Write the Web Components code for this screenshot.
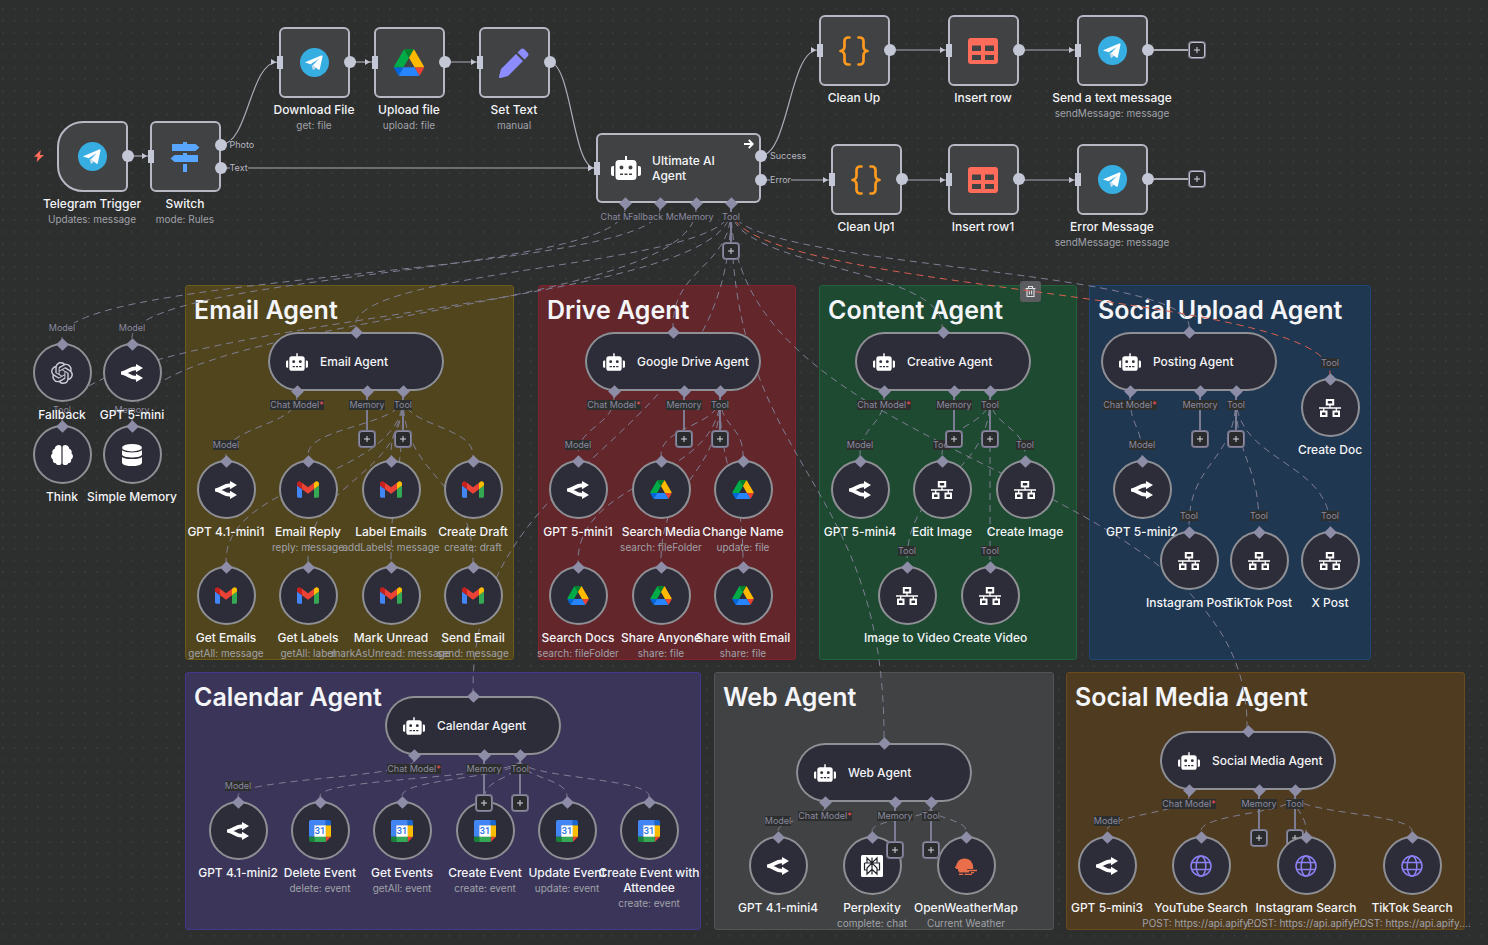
<!DOCTYPE html>
<html lang="en">
<head>
<meta charset="utf-8">
<meta name="viewport" content="width=device-width, initial-scale=1">
<title>Workflow canvas</title>
<style>
html, body { margin: 0; height: 100%; background: #2d2e2e; }
body { font-family: Inter, "Liberation Sans", sans-serif; color: #f4f5f8; }
</style>
</head>
<body>
<flow-canvas>
  <sticky-note x="185" y="285" w="329" h="375" tone="olive">Email Agent</sticky-note>
  <sticky-note x="538" y="285" w="258" h="375" tone="red">Drive Agent</sticky-note>
  <sticky-note x="819" y="285" w="258" h="375" tone="green" removable>Content Agent</sticky-note>
  <sticky-note x="1089" y="285" w="282" h="375" tone="blue">Social Upload Agent</sticky-note>
  <sticky-note x="185" y="672" w="516" h="258" tone="violet">Calendar Agent</sticky-note>
  <sticky-note x="714" y="672" w="340" h="258" tone="gray">Web Agent</sticky-note>
  <sticky-note x="1066" y="672" w="399" h="258" tone="brown">Social Media Agent</sticky-note>

  <flow-edges></flow-edges>

  <step-node x="92" y="121" icon="telegram" trigger>Telegram Trigger<span slot="sub">Updates: message</span></step-node>
  <step-node x="185" y="121" icon="signs" input outputs="Photo,Text">Switch<span slot="sub">mode: Rules</span></step-node>
  <step-node x="314" y="27" icon="telegram" input>Download File<span slot="sub">get: file</span></step-node>
  <step-node x="409" y="27" icon="drive" input>Upload file<span slot="sub">upload: file</span></step-node>
  <step-node x="514" y="27" icon="pencil" input>Set Text<span slot="sub">manual</span></step-node>
  <step-node x="854" y="15" icon="braces" input>Clean Up</step-node>
  <step-node x="983" y="15" icon="table" input>Insert row</step-node>
  <step-node x="1112" y="15" icon="telegram" input plus>Send a text message<span slot="sub">sendMessage: message</span></step-node>
  <step-node x="866" y="144" icon="braces" input>Clean Up1</step-node>
  <step-node x="983" y="144" icon="table" input>Insert row1</step-node>
  <step-node x="1112" y="144" icon="telegram" input plus>Error Message<span slot="sub">sendMessage: message</span></step-node>
  <root-agent x="596" y="133">Ultimate AI Agent</root-agent>

  <tool-node x="62" y="455" icon="brain" port="Tool">Think</tool-node>
  <tool-node x="132" y="455" icon="database" port="Memory">Simple Memory</tool-node>
  <tool-node x="62" y="373" icon="openai" port="Model">Fallback</tool-node>
  <tool-node x="132" y="373" icon="fork" port="Model">GPT 5-mini</tool-node>

  <tool-node x="226" y="490" icon="fork" port="Model">GPT 4.1-mini1</tool-node>
  <tool-node x="308" y="490" icon="gmail">Email Reply<span slot="sub">reply: message</span></tool-node>
  <tool-node x="391" y="490" icon="gmail">Label Emails<span slot="sub">addLabels: message</span></tool-node>
  <tool-node x="473" y="490" icon="gmail">Create Draft<span slot="sub">create: draft</span></tool-node>
  <tool-node x="226" y="596" icon="gmail">Get Emails<span slot="sub">getAll: message</span></tool-node>
  <tool-node x="308" y="596" icon="gmail">Get Labels<span slot="sub">getAll: label</span></tool-node>
  <tool-node x="391" y="596" icon="gmail">Mark Unread<span slot="sub">markAsUnread: message</span></tool-node>
  <tool-node x="473" y="596" icon="gmail">Send Email<span slot="sub">send: message</span></tool-node>

  <tool-node x="578" y="490" icon="fork" port="Model">GPT 5-mini1</tool-node>
  <tool-node x="661" y="490" icon="drive">Search Media<span slot="sub">search: fileFolder</span></tool-node>
  <tool-node x="743" y="490" icon="drive">Change Name<span slot="sub">update: file</span></tool-node>
  <tool-node x="578" y="596" icon="drive">Search Docs<span slot="sub">search: fileFolder</span></tool-node>
  <tool-node x="661" y="596" icon="drive">Share Anyone<span slot="sub">share: file</span></tool-node>
  <tool-node x="743" y="596" icon="drive">Share with Email<span slot="sub">share: file</span></tool-node>

  <tool-node x="860" y="490" icon="fork" port="Model">GPT 5-mini4</tool-node>
  <tool-node x="942" y="490" icon="network" port="Tool">Edit Image</tool-node>
  <tool-node x="1025" y="490" icon="network" port="Tool">Create Image</tool-node>
  <tool-node x="907" y="596" icon="network" port="Tool">Image to Video</tool-node>
  <tool-node x="990" y="596" icon="network" port="Tool">Create Video</tool-node>

  <tool-node x="1330" y="408" icon="network" port="Tool">Create Doc</tool-node>
  <tool-node x="1142" y="490" icon="fork" port="Model">GPT 5-mini2</tool-node>
  <tool-node x="1189" y="561" icon="network" port="Tool">Instagram Post</tool-node>
  <tool-node x="1259" y="561" icon="network" port="Tool">TikTok Post</tool-node>
  <tool-node x="1330" y="561" icon="network" port="Tool">X Post</tool-node>

  <tool-node x="238" y="831" icon="fork" port="Model">GPT 4.1-mini2</tool-node>
  <tool-node x="320" y="831" icon="calendar">Delete Event<span slot="sub">delete: event</span></tool-node>
  <tool-node x="402" y="831" icon="calendar">Get Events<span slot="sub">getAll: event</span></tool-node>
  <tool-node x="485" y="831" icon="calendar">Create Event<span slot="sub">create: event</span></tool-node>
  <tool-node x="567" y="831" icon="calendar">Update Event<span slot="sub">update: event</span></tool-node>
  <tool-node x="649" y="831" icon="calendar">Create Event with Attendee<span slot="sub">create: event</span></tool-node>

  <tool-node x="778" y="866" icon="fork" port="Model">GPT 4.1-mini4</tool-node>
  <tool-node x="872" y="866" icon="perplexity">Perplexity<span slot="sub">complete: chat</span></tool-node>
  <tool-node x="966" y="866" icon="weather">OpenWeatherMap<span slot="sub">Current Weather</span></tool-node>

  <tool-node x="1107" y="866" icon="fork" port="Model">GPT 5-mini3</tool-node>
  <tool-node x="1201" y="866" icon="globe">YouTube Search<span slot="sub">POST: https://api.apify....</span></tool-node>

  <agent-node x="268" y="332">Email Agent</agent-node>
  <agent-node x="585" y="332">Google Drive Agent</agent-node>
  <agent-node x="855" y="332">Creative Agent</agent-node>
  <agent-node x="1101" y="332">Posting Agent</agent-node>
  <agent-node x="385" y="696">Calendar Agent</agent-node>
  <agent-node x="796" y="743">Web Agent</agent-node>
  <agent-node x="1160" y="731">Social Media Agent</agent-node>

  <tool-node x="1306" y="866" icon="globe">Instagram Search<span slot="sub">POST: https://api.apify....</span></tool-node>
  <tool-node x="1412" y="866" icon="globe">TikTok Search<span slot="sub">POST: https://api.apify....</span></tool-node>
</flow-canvas>

<script>
const robot = `<svg viewBox="0 0 30 24"><path fill="#fff" fill-rule="evenodd" d="M14 0h2v4h6a3.500 3.500 0 0 1 3.500 3.500v13A3.500 3.500 0 0 1 22 24H8a3.500 3.500 0 0 1-3.500-3.500v-13A3.500 3.500 0 0 1 8 4h6zM10.500 9.500a2 2 0 1 0 0 4 2 2 0 0 0 0-4zm9 0a2 2 0 1 0 0 4 2 2 0 0 0 0-4zM9 17.500V19h3v-1.500zm4.500 0V19h3v-1.500zm4.500 0V19h3v-1.500zM3 10v10H2a2 2 0 0 1-2-2v-6a2 2 0 0 1 2-2zm24 0h1a2 2 0 0 1 2 2v6a2 2 0 0 1-2 2h-1z"/></svg>`;

const ICONS = {
  robot,
  telegram: `<svg viewBox="0 0 24 24"><circle cx="12" cy="12" r="12" fill="#36aee2"/><path fill="#c8daea" d="M9.500 13.600l1.100 4.300c.1.300.5.400.8.200l2-1.900z"/><path fill="#fff" d="M4.800 11.500 17.500 6.300c.8-.3 1.300.1 1.100 1l-2.200 10c-.2.700-.7.900-1.300.5l-4.500-3.600 5-5.200-6.800 4.400-3.900-1.200c-.7-.2-.7-.4-.1-.7z"/></svg>`,
  signs: `<svg viewBox="0 0 30 30"><path fill="#58a6ff" d="M13 0h4v2h8.500L29.500 5.500 25.500 9H2V2h11zM17 11v2h11v7H4.500L.5 16.500 4.500 13H13v-2zM13 22h4v8h-4z"/></svg>`,
  drive: `<svg viewBox="0 0 87.300 78"><path d="m6.600 66.850 3.850 6.650c.8 1.400 1.950 2.500 3.300 3.300l13.750-23.800h-27.500c0 1.550.4 3.100 1.200 4.500z" fill="#0066da"/><path d="m43.650 25-13.750-23.800c-1.350.8-2.500 1.900-3.300 3.300l-25.400 44a9.060 9.060 0 0 0 -1.200 4.500h27.500z" fill="#00ac47"/><path d="m73.550 76.800c1.350-.8 2.500-1.900 3.300-3.300l1.600-2.750 7.650-13.250c.8-1.400 1.200-2.950 1.200-4.500h-27.500l5.850 11.500z" fill="#ea4335"/><path d="m43.650 25 13.750-23.800c-1.350-.8-2.900-1.200-4.500-1.200h-18.500c-1.600 0-3.150.45-4.500 1.200z" fill="#00832d"/><path d="m59.800 53h-32.300l-13.750 23.800c1.350.8 2.900 1.200 4.500 1.200h50.800c1.600 0 3.150-.45 4.500-1.200z" fill="#2684fc"/><path d="m73.400 26.500-12.700-22c-.8-1.400-1.950-2.500-3.300-3.300l-13.750 23.800 16.150 28h27.450c0-1.550-.4-3.100-1.200-4.500z" fill="#ffba00"/></svg>`,
  pencil: `<svg viewBox="0 0 30 30"><path fill="#8d8cff" d="M21.500 1.500a2.800 2.800 0 0 1 4 0l3 3a2.800 2.800 0 0 1 0 4l-3 3-7-7zM17 6l7 7L9 28l-7.500 2c-1 .2-1.700-.5-1.500-1.500L2 21z"/></svg>`,
  braces: `<svg viewBox="0 0 30 30" fill="none" stroke="#ff9a1f" stroke-width="2.700" stroke-linecap="round" stroke-linejoin="round"><path d="M10.500 1.500H9A3.500 3.500 0 0 0 5.500 5v5.500A4.500 4.500 0 0 1 1.500 15a4.500 4.500 0 0 1 4 4.500V25A3.500 3.500 0 0 0 9 28.500h1.500M19.500 1.500H21A3.500 3.500 0 0 1 24.500 5v5.500a4.500 4.500 0 0 0 4 4.500 4.500 4.500 0 0 0-4 4.500V25a3.500 3.500 0 0 1-3.500 3.500h-1.500"/></svg>`,
  table: `<svg viewBox="0 0 30 26"><path fill="#ff6d5a" fill-rule="evenodd" d="M3 0h24a3 3 0 0 1 3 3v20a3 3 0 0 1-3 3H3a3 3 0 0 1-3-3V3a3 3 0 0 1 3-3zm1 7.500V13h9V7.500zm13 0V13h9V7.500zM4 17v5h9v-5zm13 0v5h9v-5z"/></svg>`,
  openai: `<svg viewBox="0 0 24 24"><path fill="#c9cad6" d="M22.2819 9.8211a5.9847 5.9847 0 0 0-.5157-4.9108 6.0462 6.0462 0 0 0-6.5098-2.9A6.0651 6.0651 0 0 0 4.9807 4.1818a5.9847 5.9847 0 0 0-3.9977 2.9 6.0462 6.0462 0 0 0 .7427 7.0966 5.98 5.98 0 0 0 .511 4.9107 6.051 6.051 0 0 0 6.5146 2.9001A5.9847 5.9847 0 0 0 13.2599 24a6.0557 6.0557 0 0 0 5.7718-4.2058 5.9894 5.9894 0 0 0 3.9977-2.9001 6.0557 6.0557 0 0 0-.7475-7.0729zm-9.022 12.6081a4.4755 4.4755 0 0 1-2.8764-1.0408l.1419-.0804 4.7783-2.7582a.7948.7948 0 0 0 .3927-.6813v-6.7369l2.02 1.1686a.071.071 0 0 1 .038.052v5.5826a4.504 4.504 0 0 1-4.4945 4.4944zm-9.6607-4.1254a4.4708 4.4708 0 0 1-.5346-3.0137l.142.0852 4.783 2.7582a.7712.7712 0 0 0 .7806 0l5.8428-3.3685v2.3324a.0804.0804 0 0 1-.0332.0615L9.74 19.9502a4.4992 4.4992 0 0 1-6.1408-1.6464zM2.3408 7.8956a4.485 4.485 0 0 1 2.3655-1.9728V11.6a.7664.7664 0 0 0 .3879.6765l5.8144 3.3543-2.0201 1.1685a.0757.0757 0 0 1-.071 0l-4.8303-2.7865A4.504 4.504 0 0 1 2.3408 7.872zm16.5963 3.8558L13.1038 8.364 15.1192 7.2a.0757.0757 0 0 1 .071 0l4.8303 2.7913a4.4944 4.4944 0 0 1-.6765 8.1042v-5.6772a.79.79 0 0 0-.407-.667zm2.0107-3.0231l-.142-.0852-4.7735-2.7818a.7759.7759 0 0 0-.7854 0L9.409 9.2297V6.8974a.0662.0662 0 0 1 .0284-.0615l4.8303-2.7866a4.4992 4.4992 0 0 1 6.6802 4.66zM8.3065 12.863l-2.02-1.1638a.0804.0804 0 0 1-.038-.0567V6.0742a4.4992 4.4992 0 0 1 7.3757-3.4537l-.142.0805L8.704 5.459a.7948.7948 0 0 0-.3927.6813zm1.0976-2.3654l2.602-1.4998 2.6069 1.4998v2.9994l-2.5974 1.4997-2.6067-1.4997Z"/></svg>`,
  fork: `<svg viewBox="0 0 22 18"><path fill="none" stroke="#fff" stroke-width="3.600" d="M2 9c5-.8 6-4.900 14-4.900M2 9c5 .8 6 4.900 14 4.900"/><path fill="#fff" d="M0 7.600 6 6v6l-6-1.600zM15 0l7 4.100-7 4.100zM15 9.800l7 4.100-7 4.100z"/></svg>`,
  brain: `<svg viewBox="0 0 22 20"><path fill="#fff" d="M10.400 2v16c0 3-5 2.700-5.500.2C2.800 18.300 1.300 16.500 2 14.500-.5 13 -.5 9.700 1.500 8.500.7 6.200 2 4.300 3.600 4 4-.8 10.400-1 10.400 2zM11.600 2v16c0 3 5 2.700 5.500.2 2.100.1 3.600-1.700 2.900-3.700 2.500-1.500 2.500-4.800.5-6 .8-2.300-.5-4.200-2.100-4.500C18-.8 11.600-1 11.600 2z"/></svg>`,
  database: `<svg viewBox="0 0 20 22" fill="#fff"><ellipse cx="10" cy="3.700" rx="10" ry="3.700"/><path d="M0 6.200c4 3 16 3 20 0v4c0 4.300-20 4.300-20 0zM0 12.400c4 3 16 3 20 0v6c0 4.800-20 4.800-20 0z"/><path stroke="#2d2d39" stroke-width="1.200" fill="none" d="M0 12c2 3.300 18 3.300 20 0"/></svg>`,
  gmail: `<svg viewBox="52 42 88 66"><path fill="#4285f4" d="M58 108h14V74L52 59v43c0 3.320 2.690 6 6 6"/><path fill="#34a853" d="M120 108h14c3.320 0 6-2.690 6-6V59l-20 15"/><path fill="#fbbc04" d="M120 48v26l20-15v-8c0-7.420-8.470-11.650-14.400-7.200"/><path fill="#ea4335" d="M72 74V48l24 18 24-18v26L96 92"/><path fill="#c5221f" d="M52 51v8l20 15V48l-5.600-4.200c-5.940-4.450-14.400-.22-14.400 7.200"/></svg>`,
  network: `<svg viewBox="0 0 22 18" fill="none" stroke="#fff"><path stroke-width="2" d="M7.800 1h6.400v4.600H7.800zM2 12.400h5.500V17H2zM14.500 12.400H20V17h-5.500z"/><path stroke-width="1.300" d="M0 9h22M11 6v3M4.700 9v3M17.300 9v3"/></svg>`,
  calendar: `<svg viewBox="-3.750 -3.750 200 200"><path fill="#fff" d="M43 43h107v107H43z"/><path fill="#ea4335" d="M148.900 196.200l47.300-47.300H148.900z"/><path fill="#34a853" d="M43.600 196.200h105.300v-47.300H43.600z"/><path fill="#4285f4" d="M12-3.700A15.800 15.800 0 0 0-3.700 12v136.900h47.300V43.600h105.300V-3.700z"/><path fill="#188038" d="M-3.700 148.900v31.600c0 8.700 7 15.700 15.700 15.700h31.600v-47.300z"/><path fill="#fbbc04" d="M148.900 43.600v105.300h47.300V43.600z"/><path fill="#1967d2" d="M196.200 43.600V12A15.800 15.800 0 0 0 180.500-3.700h-31.600v47.300z"/><text x="96" y="126" text-anchor="middle" font-family="Roboto, sans-serif" font-weight="500" font-size="84" fill="#1a73e8">31</text></svg>`,
  perplexity: `<svg viewBox="0 0 22 22"><rect width="22" height="22" rx="1.500" fill="#fff"/><path fill="none" stroke="#20222c" stroke-width="1.200" d="M11 2.500v17M6 3l5 5 5-5v5H6zM3.500 8h15v7H16M6 15H3.500V8M11 8l-5 5v6l5-4.700 5 4.700v-6z"/></svg>`,
  weather: `<svg viewBox="0 0 22 18" fill="#eb6e4b"><path d="M1.200 12A8.600 8.600 0 1 1 18 12z"/><path d="M0 9.500h9V11H0zM11 12.800h11v1.500H11zM3 11.500h9v2.800H3zM4 14.200h10v1.300H4zM16 15h3v1.200h-3zM4 16.700h4V18H4zM9.500 16.700H17V18H9.500z"/></svg>`,
  globe: `<svg viewBox="0 0 22 22" fill="none" stroke="#8c80f5" stroke-width="1.500"><circle cx="11" cy="11" r="10"/><ellipse cx="11" cy="11" rx="4.800" ry="10"/><path d="M1.800 7.500h18.400M1.800 14.500h18.400"/></svg>`,
  bolt: `<svg viewBox="0 0 10 12"><path fill="#ff6d5a" d="M6.800 0 0 6.800h3.600L2.600 12 10 5H6z"/></svg>`,
  trash: `<svg viewBox="0 0 10 11" fill="none" stroke="#e0e1e6" stroke-width="1.100"><path d="M0 2.500h10M3 2.500v-2h4v2M1.500 2.500v8h7v-8M3.900 4.500v4M6.100 4.500v4"/></svg>`,
  arrow: `<svg viewBox="0 0 10 10" fill="none" stroke="#fff" stroke-width="1.800"><path d="M0 5h8.500M4.800 1l4 4-4 4"/></svg>`
};

const place = (el, x, y) => { el.style.left = `${x}px`; el.style.top = `${y}px`; };
const num = (el, name) => Number(el.getAttribute(name));

class FlowElement extends HTMLElement {
  connectedCallback() {
    if (this.shadowRoot) return;
    this.attachShadow({ mode: 'open' }).innerHTML = this.view();
    this.ready();
  }
  view() { return '<slot></slot>'; }
  ready() {}
}

class FlowIcon extends FlowElement {
  view() {
    return `<style>:host{display:block;line-height:0;flex:none}svg{display:block;width:100%;height:100%}</style>${ICONS[this.getAttribute('name')]}`;
  }
}

class FlowCanvas extends FlowElement {
  view() {
    return `<style>
      :host{display:block;height:100vh}
      main{position:relative;height:100%;overflow:auto;background:#2d2e2e}
      .grid{position:absolute;inset:0;width:100%;height:100%}
    </style>
    <main aria-label="Workflow">
      <svg class="grid" aria-hidden="true"><defs><pattern id="dots" width="16" height="16" patternUnits="userSpaceOnUse" patternTransform="translate(-3 3) scale(.7333)"><circle cx="8" cy="8" r=".8" fill="#5c5e60"/></pattern></defs><rect width="100%" height="100%" fill="url(#dots)"/></svg>
      <slot></slot>
    </main>`;
  }
}

class StickyNote extends FlowElement {
  view() {
    const [bg, line] = {
      olive: ['#51451e', '#6a5a1c'], red: ['#63262b', '#80232d'], green: ['#1d4a31', '#20633e'],
      blue: ['#1f3750', '#1e4673'], violet: ['#3b3659', '#43378c'], gray: ['#414243', '#525456'],
      brown: ['#4f3b20', '#6a4b1c']
    }[this.getAttribute('tone')];
    return `<style>
      :host{position:absolute;display:block;box-sizing:border-box;padding:8px;background:${bg};border:1px solid ${line};border-radius:3px}
      h2{margin:0;font-size:25px;line-height:32px;font-weight:600;white-space:nowrap;color:#f4f5f8}
      button{position:absolute;right:35px;top:-5px;width:21px;height:21px;padding:5px;border:0;border-radius:3px;background:#5a5c5f}
      flow-icon{width:11px;height:11px}
    </style><h2><slot></slot></h2>${this.hasAttribute('removable') ? '<button aria-label="Delete note"><flow-icon name="trash"></flow-icon></button>' : ''}`;
  }
  ready() {
    place(this, num(this, 'x'), num(this, 'y'));
    this.style.width = `${num(this, 'w')}px`;
    this.style.height = `${num(this, 'h')}px`;
  }
}

/* Each fan starts at one port and drops to the listed ports. */
const FANS = [
  [625, 209, [[132, 338]]],
  [660, 209, [[62, 338]]],
  [696, 209, [[132, 420]]],
  [731, 209, [[62, 420], [355, 326], [673, 326], [942, 326], [1189, 326], [473, 690], [884, 737], [1247, 725]]],
  [297, 397, [[226, 455]]],
  [403, 397, [[308, 455], [391, 455], [473, 455], [226, 561], [308, 561], [391, 561], [473, 561]]],
  [614, 397, [[578, 455]]],
  [720, 397, [[661, 455], [743, 455], [578, 561], [661, 561], [743, 561]]],
  [884, 397, [[860, 455]]],
  [990, 397, [[942, 455], [1025, 455], [907, 561], [990, 561]]],
  [1130, 397, [[1142, 455]]],
  [1236, 397, [[1189, 526], [1259, 526], [1330, 526]]],
  [414, 760, [[238, 796]]],
  [520, 760, [[320, 796], [402, 796], [485, 796], [567, 796], [649, 796]]],
  [825, 807, [[778, 831]]],
  [931, 807, [[872, 831], [966, 831]]],
  [1189, 796, [[1107, 831]]],
  [1295, 796, [[1201, 831], [1306, 831], [1412, 831]]]
];
const MAINS = [
  [127, 156, 149, 156], [220, 145, 278, 62], [220, 168, 595, 168], [350, 62, 372, 62], [444, 62, 478, 62],
  [549, 62, 595, 168], [760, 156, 818, 50], [760, 180, 830, 180], [890, 50, 947, 50], [1019, 50, 1076, 50],
  [902, 180, 947, 180], [1019, 180, 1076, 180]
];

class FlowEdges extends FlowElement {
  view() {
    const drop = (x, y, tx, ty) => { const m = (y + ty) / 2; return `M${x} ${y}C${x} ${m} ${tx} ${m} ${tx} ${ty}v6`; };
    const fans = FANS.map(([x, y, ends]) => ends.map(([tx, ty]) => drop(x, y, tx, ty)).join('')).join('');
    const mains = MAINS.map(([x, y, tx, ty]) => {
      const m = (x + tx) / 2;
      return `<path d="M${x} ${y}C${m} ${y} ${m} ${ty} ${tx} ${ty}"/><path class="tip" d="M${tx - 7} ${ty - 3}l5 3-5 3z"/>`;
    }).join('');
    return `<style>
      :host{position:absolute;inset:0;pointer-events:none}
      svg{display:block;width:100%;height:100%;overflow:visible;fill:none}
      .main{stroke:#a9abb5;stroke-width:1.2}
      .main .tip{fill:#c4c8d6;stroke:none}
      .fan{stroke:#7f7e93;stroke-dasharray:7 5}
      .bad{stroke:#d8604f;stroke-dasharray:7 5}
    </style><svg aria-hidden="true"><path class="fan" d="${fans}"/><path class="bad" d="${drop(731, 209, 1330, 373)}"/><g class="main">${mains}</g></svg>`;
  }
}

class PlusButton extends FlowElement {
  view() {
    return `<style>
      :host{display:block;flex:none;--ring:#8d8ca6}
      :host([bright]){--ring:#c0c2cc}
      button{display:block;box-sizing:border-box;width:16px;height:16px;padding:0;border:1px solid var(--ring);border-radius:3px;background:#2a2b2c;box-shadow:0 0 0 1px #76758a}
      svg{display:block;width:14px;height:14px}
    </style><button aria-label="Add node"><svg viewBox="0 0 14 14" stroke="#d5d6df"><path d="M7 4v6M4 7h6"/></svg></button>`;
  }
}

/* Diamond port: label below for outputs, above for inputs. */
class NodePort extends FlowElement {
  view() {
    const label = this.getAttribute('label');
    const plus = this.hasAttribute('plus');
    const text = label ? `<span class="label">${label}${this.hasAttribute('required') ? '<b>*</b>' : ''}</span>` : '';
    const dia = '<i></i>';
    const input = this.hasAttribute('input');
    return `<style>
      :host{position:absolute;display:flex;flex-direction:column;align-items:center;width:0}
      i{flex:none;position:relative;width:9px;height:9px;background:#8e8da8;transform:rotate(45deg)}
      .label{position:relative;flex:none;font-size:9px;line-height:10px;color:#8b8a9f;background:#2d2e2e;white-space:nowrap;margin:${input ? '0 0 7px' : '4px 0 0'}}
      b{color:#f4525a;font-weight:400}
      .stem{position:absolute;top:4px;left:-1px;width:2px;height:${plus ? 42 : 7}px;background:#7d7c95}
      plus-button{position:relative;margin-top:21px}
    </style>${input ? text + dia : `<div class="stem"></div>${dia}${text}${plus ? '<plus-button></plus-button>' : ''}`}`;
  }
  ready() {
    const up = this.hasAttribute('input') && this.hasAttribute('label') ? 21 : 4;
    place(this, num(this, 'x'), num(this, 'y') - up);
  }
}

/* Round output with an optional caption to its right. */
class OutPort extends FlowElement {
  view() {
    const label = this.getAttribute('label');
    return `<style>
      :host{position:absolute;display:flex;align-items:center;height:12px}
      i{flex:none;width:12px;height:12px;border-radius:50%;background:#c4c8d6}
      span{margin-left:3px;font-size:9px;line-height:10px;color:#b7b9c2;background:#2d2e2e}
      hr{flex:none;width:35px;height:2px;margin:0;border:0;background:#a9abb5}
    </style><i></i>${label ? `<span>${label}</span>` : ''}${this.hasAttribute('plus') ? '<hr><plus-button bright></plus-button>' : ''}`;
  }
  ready() { place(this, num(this, 'x') - 6, num(this, 'y') - 6); }
}

const CAPTION = `
  .title{font-size:12px;line-height:15px;font-weight:500;text-align:center;color:#f4f5f8}
  .sub{font-size:10px;line-height:16px;color:#a0a2a9;white-space:nowrap}`;

class StepNode extends FlowElement {
  view() {
    const icon = this.getAttribute('icon');
    const outs = this.getAttribute('outputs')?.split(',');
    const size = { telegram: '29px;height:29px', drive: '30px;height:27px', table: '30px;height:26px' }[icon] || '30px;height:30px';
    return `<style>
      :host{position:absolute;display:flex;flex-direction:column;align-items:center;width:130px}
      .box{position:relative;box-sizing:border-box;width:71px;height:71px;display:grid;place-items:center;margin-bottom:4px;background:#414244;border:2px solid #b6b8c4;border-radius:6px}
      :host([trigger]) .box{border-radius:26px 6px 6px 26px}
      .box>flow-icon{width:${size}}
      .in{position:absolute;left:-4px;top:27px;width:6px;height:13px;background:#c4c8d6}
      .bolt{position:absolute;left:7px;top:29px;width:10px;height:12px}
      ${CAPTION}
    </style>
    ${this.hasAttribute('trigger') ? '<flow-icon class="bolt" name="bolt"></flow-icon>' : ''}
    <div class="box"><flow-icon name="${icon}"></flow-icon>
      ${this.hasAttribute('input') ? '<div class="in"></div>' : ''}
      ${outs ? outs.map((o, i) => `<out-port x="69" y="${22 + i * 23}" label="${o}"></out-port>`).join('') : `<out-port x="69" y="33" ${this.hasAttribute('plus') ? 'plus' : ''}></out-port>`}
    </div>
    <div class="title"><slot></slot></div><div class="sub"><slot name="sub"></slot></div>`;
  }
  ready() { place(this, num(this, 'x') - 65, num(this, 'y')); }
}

class ToolNode extends FlowElement {
  view() {
    const icon = this.getAttribute('icon');
    const port = this.getAttribute('port');
    const size = { gmail: '22px;height:17px', drive: '22px;height:19px', fork: '22px;height:18px', network: '22px;height:18px', weather: '22px;height:18px', brain: '22px;height:20px', database: '20px;height:22px' }[icon] || '22px;height:22px';
    return `<style>
      :host{position:absolute;display:flex;flex-direction:column;align-items:center;width:104px}
      .disc{position:relative;flex:none;box-sizing:border-box;width:59px;height:59px;display:grid;place-items:center;margin-bottom:5px;background:#2d2d39;border:2px solid #8f9095;border-radius:50%}
      .disc>flow-icon{width:${size}}
      ${CAPTION}
    </style>
    <div class="disc"><flow-icon name="${icon}"></flow-icon></div>
    <node-port input x="52" y="1" ${port ? `label="${port}"` : ''}></node-port>
    <div class="title"><slot></slot></div><div class="sub"><slot name="sub"></slot></div>`;
  }
  ready() { place(this, num(this, 'x') - 52, num(this, 'y') - 30); }
}

class AgentNode extends FlowElement {
  view() {
    return `<style>
      :host{position:absolute;box-sizing:border-box;display:flex;align-items:center;gap:12px;width:176px;height:59px;padding-left:18px;background:#2d2d39;border-radius:30px;box-shadow:inset 0 0 0 2px #8f9095}
      flow-icon{width:22px;height:18px}
      .title{font-size:12px;line-height:15px;font-weight:500;white-space:nowrap}
    </style>
    <flow-icon name="robot"></flow-icon><div class="title"><slot></slot></div>
    <node-port input x="88" y="0"></node-port>
    <node-port x="29" y="59" label="Chat Model" required></node-port>
    <node-port x="99" y="59" label="Memory" plus></node-port>
    <node-port x="135" y="59" label="Tool" plus></node-port>`;
  }
  ready() { place(this, num(this, 'x'), num(this, 'y')); }
}

class RootAgent extends FlowElement {
  view() {
    return `<style>
      :host{position:absolute;box-sizing:border-box;display:flex;align-items:center;gap:11px;width:165px;height:70px;padding:0 28px 0 15px;background:#414244;border-radius:6px;box-shadow:inset 0 0 0 2px #b6b8c4}
      .bot{width:30px;height:24px}
      .title{font-size:12px;line-height:15px;font-weight:500}
      .go{position:absolute;right:7px;top:6px;width:10px;height:10px}
      .in{position:absolute;left:-2px;top:29px;width:6px;height:13px;background:#c4c8d6}
    </style>
    <div class="in"></div><flow-icon class="bot" name="robot"></flow-icon><div class="title"><slot></slot></div>
    <flow-icon class="go" name="arrow"></flow-icon>
    <out-port x="165" y="23" label="Success"></out-port><out-port x="165" y="47" label="Error"></out-port>
    <node-port x="29" y="70" label="Chat Model"></node-port>
    <node-port x="64" y="70" label="Fallback Model"></node-port>
    <node-port x="100" y="70" label="Memory"></node-port>
    <node-port x="135" y="70" label="Tool" plus></node-port>`;
  }
  ready() { place(this, num(this, 'x'), num(this, 'y')); }
}

for (const [tag, type] of Object.entries({
  'flow-icon': FlowIcon, 'plus-button': PlusButton, 'node-port': NodePort, 'out-port': OutPort,
  'sticky-note': StickyNote, 'flow-edges': FlowEdges, 'step-node': StepNode, 'tool-node': ToolNode,
  'agent-node': AgentNode, 'root-agent': RootAgent, 'flow-canvas': FlowCanvas
})) customElements.define(tag, type);
</script>
</body>
</html>
